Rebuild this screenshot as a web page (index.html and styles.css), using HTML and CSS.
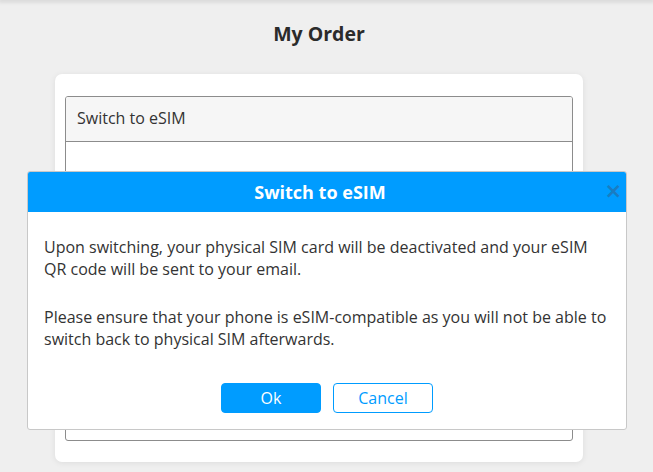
FILE: index.html
```html
<!DOCTYPE html>
<html lang="en">
<head>
	<meta charset="UTF-8">
	<meta name="viewport" content="width=device-width, initial-scale=1.0">
	<title>My Order</title>
	<link rel="stylesheet" href="styles.css">
</head>
<body>
	<div class="topbar"></div>
	<h1 class="page-title">My Order</h1>

	<div class="card">
		<div class="panel">
			<div class="panel-header">Switch to eSIM</div>
			<div class="panel-body"></div>
		</div>
	</div>

	<div class="modal">
		<div class="modal-header">
			<span class="modal-title">Switch to eSIM</span>
			<button class="modal-close" aria-label="Close">&times;</button>
		</div>
		<div class="modal-body">
			<p>Upon switching, your physical SIM card will be deactivated and your eSIM QR code will be sent to your email.</p>
			<p>Please ensure that your phone is eSIM-compatible as you will not be able to switch back to physical SIM afterwards.</p>
		</div>
		<div class="modal-actions">
			<button class="btn btn-primary">Ok</button>
			<button class="btn btn-outline">Cancel</button>
		</div>
	</div>
</body>
</html>
```

FILE: styles.css
```css
:root {
	--brand: #009cff;
	--text: #333333;
	--page-bg: #efefef;
}

* {
	box-sizing: border-box;
}

body {
	margin: 0;
	background-color: var(--page-bg);
	color: var(--text);
	font-family: "Open Sans", "Noto Sans", sans-serif;
	font-size: 16px;
	position: relative;
	min-height: 472px;
}

.topbar {
	height: 0;
	box-shadow: 0 0 4px 2px rgba(0, 0, 0, 0.12);
}

.page-title {
	margin: 0;
	padding: 20px 15px 0 0;
	height: 74px;
	text-align: center;
	font-size: 19.5px;
	font-weight: 700;
	color: #2b2b2b;
}

.card {
	width: 528px;
	margin-left: 55px;
	background: #fff;
	border-radius: 7px;
	box-shadow: 0 1px 6px rgba(0, 0, 0, 0.08);
	padding: 22px 10px 21px;
}

.panel {
	border: 1px solid #8c8c8c;
	border-radius: 3px;
	overflow: hidden;
}

.panel-header {
	height: 45px;
	line-height: 43px;
	padding-left: 11px;
	background: #f6f6f6;
	border-bottom: 1px solid #8c8c8c;
	font-size: 16px;
}

.panel-body {
	height: 298px;
}

.modal {
	position: absolute;
	left: 27px;
	top: 171px;
	width: 600px;
	background: #fff;
	border: 1px solid #c8c8c8;
	border-radius: 3px;
	overflow: hidden;
}

.modal-header {
	position: relative;
	height: 40px;
	padding-right: 14px;
	background: var(--brand);
	display: flex;
	align-items: center;
	justify-content: center;
}

.modal-title {
	color: #fff;
	font-size: 18px;
	font-weight: 700;
}

.modal-close {
	position: absolute;
	right: 4px;
	top: 9px;
	border: none;
	background: none;
	padding: 0;
	color: #1a7cc2;
	font-size: 21px;
	font-weight: 700;
	line-height: 20px;
	font-family: "DejaVu Sans", sans-serif;
	cursor: pointer;
}

.modal-body {
	padding: 24px 16px 0;
}

.modal-body p {
	margin: 0;
	line-height: 22px;
}

.modal-body p + p {
	margin-top: 26px;
}

.modal-actions {
	display: flex;
	justify-content: center;
	gap: 12px;
	padding: 33px 0 16px;
}

.btn {
	width: 100px;
	height: 30px;
	border-radius: 4px;
	font-family: "Open Sans", "Noto Sans", sans-serif;
	font-size: 16px;
	cursor: pointer;
}

.btn-primary {
	background: var(--brand);
	border: 1px solid var(--brand);
	color: #fff;
}

.btn-outline {
	background: #fff;
	border: 1px solid var(--brand);
	color: var(--brand);
}
```
